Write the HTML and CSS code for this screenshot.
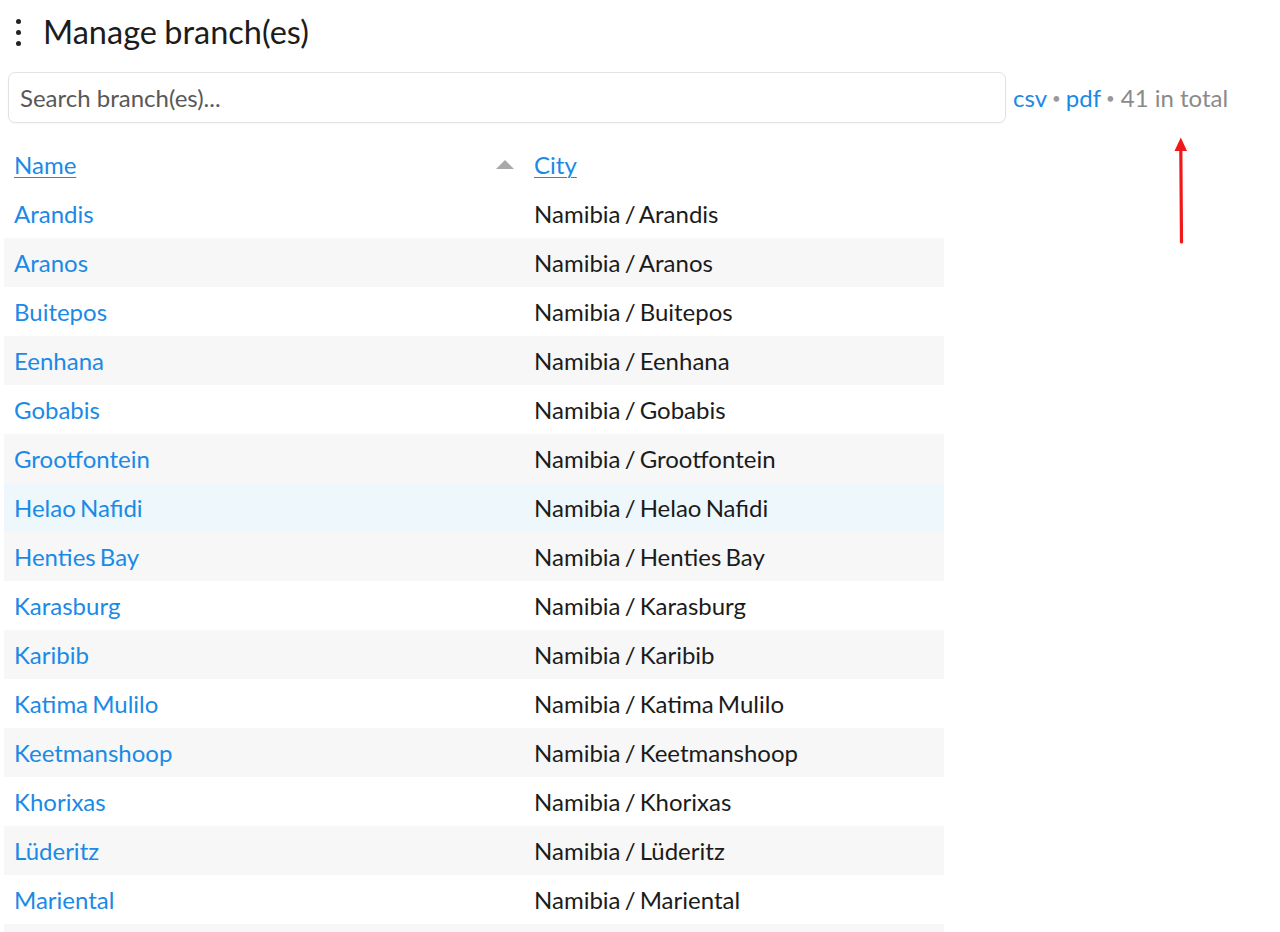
FILE: index.html
```html
<!DOCTYPE html>
<html>
<head>
<meta charset="utf-8">
<link rel="stylesheet" href="styles.css">
</head>
<body>
<div class="page">
  <div class="title-row">
    <span class="kebab"><i></i><i></i><i></i></span>
    <h1>Manage branch(es)</h1>
  </div>
  <div class="toolbar">
    <input class="search" type="text" placeholder="Search branch(es)...">
    <div class="meta">
      <a href="#">csv</a><span class="dot">•</span><a href="#">pdf</a><span class="dot">•</span><span class="total">41 in total</span>
    </div>
  </div>
  <table class="grid">
    <thead>
      <tr>
        <th class="c-name"><a href="#">Name</a><span class="sort"></span></th>
        <th class="c-city"><a href="#">City</a></th>
      </tr>
    </thead>
    <tbody>
      <tr><td><a href="#">Arandis</a></td><td>Namibia / Arandis</td></tr>
      <tr><td><a href="#">Aranos</a></td><td>Namibia / Aranos</td></tr>
      <tr><td><a href="#">Buitepos</a></td><td>Namibia / Buitepos</td></tr>
      <tr><td><a href="#">Eenhana</a></td><td>Namibia / Eenhana</td></tr>
      <tr><td><a href="#">Gobabis</a></td><td>Namibia / Gobabis</td></tr>
      <tr><td><a href="#">Grootfontein</a></td><td>Namibia / Grootfontein</td></tr>
      <tr class="hover"><td><a href="#">Helao Nafidi</a></td><td>Namibia / Helao Nafidi</td></tr>
      <tr><td><a href="#">Henties Bay</a></td><td>Namibia / Henties Bay</td></tr>
      <tr><td><a href="#">Karasburg</a></td><td>Namibia / Karasburg</td></tr>
      <tr><td><a href="#">Karibib</a></td><td>Namibia / Karibib</td></tr>
      <tr><td><a href="#">Katima Mulilo</a></td><td>Namibia / Katima Mulilo</td></tr>
      <tr><td><a href="#">Keetmanshoop</a></td><td>Namibia / Keetmanshoop</td></tr>
      <tr><td><a href="#">Khorixas</a></td><td>Namibia / Khorixas</td></tr>
      <tr><td><a href="#">Lüderitz</a></td><td>Namibia / Lüderitz</td></tr>
      <tr><td><a href="#">Mariental</a></td><td>Namibia / Mariental</td></tr>
      <tr class="tail"><td></td><td></td></tr>
    </tbody>
  </table>
</div>
<svg class="annot-arrow" width="20" height="110" viewBox="0 0 20 110">
  <path d="M10.5 106 L9.8 12" stroke="#f01818" stroke-width="3.2" fill="none" stroke-linecap="round"/>
  <path d="M3.5 15 L9.8 1.5 L16 15 Z" fill="#f01818"/>
</svg>
</body>
</html>
```
FILE: styles.css
```css
html, body {
  margin: 0;
  padding: 0;
  background: #fff;
}
body {
  font-family: Lato, "Open Sans", sans-serif;
  color: #1b1b1b;
  overflow: hidden;
  position: relative;
  height: 932px;
}
.page {
  padding: 0 0 0 4px;
}
.title-row {
  display: flex;
  align-items: center;
  height: 62px;
  padding-left: 12px;
  gap: 22px;
}
.kebab {
  display: flex;
  flex-direction: column;
  gap: 6px;
  margin-top: 3px;
}
.kebab i {
  display: block;
  width: 5px;
  height: 5px;
  border-radius: 50%;
  background: #222;
}
h1 {
  margin: 0;
  font-size: 32.5px;
  font-weight: 400;
  color: #1c1c1c;
  word-spacing: -1px;
}
.toolbar {
  display: flex;
  align-items: center;
  margin-top: 10px;
  padding-left: 4px;
  gap: 7px;
}
.search {
  box-sizing: border-box;
  width: 998px;
  height: 51px;
  border: 1px solid #e2e2e2;
  border-radius: 7px;
  padding: 0 11px;
  font-family: Lato, sans-serif;
  font-size: 24px;
  color: #333;
  outline: none;
  box-shadow: 0 1px 2px rgba(0,0,0,0.03);
}
.search::placeholder {
  color: #585858;
}
.meta {
  font-size: 24px;
  display: flex;
  align-items: center;
  white-space: nowrap;
}
.meta a {
  color: #1a8ae6;
  text-decoration: none;
}
.dot {
  color: #999;
  font-size: 15px;
  margin: 0 5px;
}
.total {
  color: #8a8a8a;
  margin-left: 1px;
}
.grid {
  margin-top: 17px;
  border-collapse: collapse;
  width: 940px;
  font-size: 24px;
  word-spacing: -2px;
}
.grid th, .grid td {
  height: 49px;
  padding: 0 10px;
  text-align: left;
  font-weight: 400;
  vertical-align: middle;
  white-space: nowrap;
}
.grid .c-name {
  width: 500px;
  position: relative;
}
.grid a {
  color: #1a8ae6;
  text-decoration: none;
}
.grid th a {
  text-decoration: underline;
  text-underline-offset: 3px;
  text-decoration-thickness: 1px;
}
.sort {
  position: absolute;
  right: 10px;
  top: 20px;
  width: 0;
  height: 0;
  border-left: 9px solid transparent;
  border-right: 9px solid transparent;
  border-bottom: 9px solid #a9a9a9;
}
.grid tbody tr:nth-child(even) {
  background: #f7f7f7;
}
.grid tbody tr.hover {
  background: #eef7fb;
}
.grid td {
  color: #1b1b1b;
}
.annot-arrow {
  position: absolute;
  left: 1171px;
  top: 136px;
}
```
